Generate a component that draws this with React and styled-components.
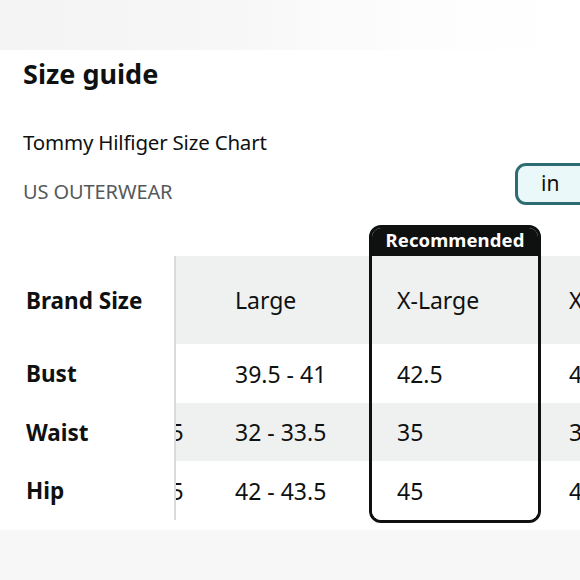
import { useLayoutEffect, useRef } from "react";
import styled, { createGlobalStyle } from "styled-components";

const GlobalStyle = createGlobalStyle`
  html, body {
    margin: 0;
    padding: 0;
    background: #f6f7f6;
    overflow: hidden;
  }
  body {
    font-family: "Noto Sans", "Open Sans", Arial, sans-serif;
    color: #0f1111;
  }
`;

const TopBand = styled.div`
  height: 50px;
  background: linear-gradient(90deg, #f4f4f4 0%, #f7f7f7 40%, #fdfdfd 70%, #ffffff 100%);
`;

const Panel = styled.div`
  background: #ffffff;
  padding: 0 0 7px 23px;
  width: 557px;
  overflow: hidden;
`;

const Title = styled.h1`
  margin: 0;
  padding-top: 6px;
  font-size: 27px;
  font-weight: 700;
  line-height: 36px;
`;

const Subtitle = styled.p`
  margin: 37px 0 0;
  font-size: 20.5px;
  line-height: 27px;
  letter-spacing: -0.2px;
`;

const UnitRow = styled.div`
  display: grid;
  grid-template-columns: 492px auto;
  align-items: end;
  margin-top: 7px;
`;

const Region = styled.span`
  font-size: 20px;
  line-height: 27px;
  color: #565959;
  letter-spacing: -0.1px;
`;

const ToggleGroup = styled.div`
  display: flex;
  gap: 8px;
`;

const UnitButton = styled.button`
  width: 80px;
  height: 42px;
  box-sizing: border-box;
  border-radius: 11px;
  border: ${({ $active }) => ($active ? "3px solid #2b6d72" : "1px solid #888c8c")};
  background: ${({ $active }) => ($active ? "#eaf8f9" : "#ffffff")};
  font-family: inherit;
  font-size: 21px;
  color: #0f1111;
  text-align: left;
  padding: 0 0 3px 23px;
`;

const Table = styled.div`
  display: flex;
  margin-top: 20px;
`;

const LabelColumn = styled.div`
  width: 153px;
  flex-shrink: 0;
  padding-top: 31px;
`;

const LabelCells = styled.div`
  border-right: 2px solid #d9dbdb;
  background: #ffffff;
`;

const LabelCell = styled.div`
  height: ${({ $h }) => $h}px;
  display: flex;
  align-items: center;
  padding-left: 3px;
  font-size: 22.5px;
  font-weight: 700;
`;

const ScrollArea = styled.div`
  flex: 1;
  overflow: hidden;
`;

const Columns = styled.div`
  display: flex;
  width: max-content;
`;

const Column = styled.div`
  width: ${({ $w }) => $w}px;
  flex-shrink: 0;
  padding-top: 31px;
`;

const RecommendedColumn = styled.div`
  width: 172px;
  flex-shrink: 0;
  box-sizing: border-box;
  border: 3px solid #0f1111;
  border-radius: 12px;
  overflow: hidden;
`;

const RecommendedLabel = styled.div`
  height: 28px;
  background: #0f1111;
  color: #ffffff;
  font-size: 18.5px;
  font-weight: 700;
  display: flex;
  align-items: center;
  justify-content: center;
  letter-spacing: 0.1px;
  padding-bottom: 5px;
  box-sizing: border-box;
`;

const Cell = styled.div`
  height: ${({ $h }) => $h}px;
  display: flex;
  align-items: center;
  padding-left: ${({ $pad }) => $pad}px;
  background: ${({ $shaded }) => ($shaded ? "#eff1f1" : "#ffffff")};
  font-size: 23px;
  white-space: nowrap;
`;

const rows = [
  { label: "Brand Size", h: 88, shaded: true },
  { label: "Bust", h: 59, shaded: false },
  { label: "Waist", h: 58, shaded: true },
  { label: "Hip", h: 59, shaded: false },
];

const sizes = [
  { name: "Medium", values: ["37 - 38.5", "30.5 - 31.5", "40.5 - 41.5"], w: 162 },
  { name: "Large", values: ["39.5 - 41", "32 - 33.5", "42 - 43.5"], w: 162 },
  { name: "X-Large", values: ["42.5", "35", "45"], recommended: true },
  { name: "XX-Large", values: ["44 - 45.5", "37 - 38.5", "47 - 48.5"], w: 172 },
];

function SizeCells({ size, pad }) {
  const texts = [size.name, ...size.values];
  return rows.map((row, i) => (
    <Cell key={row.label} $h={row.h} $shaded={row.shaded} $pad={pad}>
      {texts[i]}
    </Cell>
  ));
}

export default function App() {
  const scrollRef = useRef(null);

  useLayoutEffect(() => {
    if (scrollRef.current) scrollRef.current.scrollLeft = 131;
  }, []);

  return (
    <>
      <GlobalStyle />
      <TopBand />
      <Panel>
        <Title>Size guide</Title>
        <Subtitle>Tommy Hilfiger Size Chart</Subtitle>
        <UnitRow>
          <Region>US OUTERWEAR</Region>
          <ToggleGroup>
            <UnitButton $active>in</UnitButton>
            <UnitButton>cm</UnitButton>
          </ToggleGroup>
        </UnitRow>
        <Table>
          <LabelColumn>
            <LabelCells>
              {rows.map((row) => (
                <LabelCell key={row.label} $h={row.h}>
                  {row.label}
                </LabelCell>
              ))}
            </LabelCells>
          </LabelColumn>
          <ScrollArea ref={scrollRef}>
            <Columns>
              {sizes.map((size) =>
                size.recommended ? (
                  <RecommendedColumn key={size.name}>
                    <RecommendedLabel>Recommended</RecommendedLabel>
                    <SizeCells size={size} pad={25} />
                  </RecommendedColumn>
                ) : (
                  <Column key={size.name} $w={size.w}>
                    <SizeCells size={size} pad={28} />
                  </Column>
                )
              )}
            </Columns>
          </ScrollArea>
        </Table>
      </Panel>
    </>
  );
}
